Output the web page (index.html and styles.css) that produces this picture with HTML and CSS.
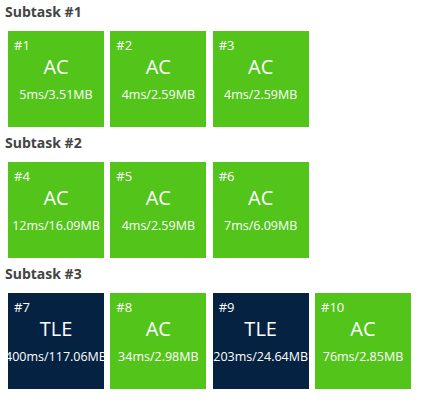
FILE: index.html
```html
<!DOCTYPE html>
<html>
<head>
<meta charset="utf-8">
<link rel="stylesheet" href="styles.css">
</head>
<body>
<div class="page">
  <section class="subtask">
    <h3 class="title">Subtask #1</h3>
    <div class="cases">
      <div class="case ac"><span class="id">#1</span><span class="verdict">AC</span><span class="usage">5ms/3.51MB</span></div>
      <div class="case ac"><span class="id">#2</span><span class="verdict">AC</span><span class="usage">4ms/2.59MB</span></div>
      <div class="case ac"><span class="id">#3</span><span class="verdict">AC</span><span class="usage">4ms/2.59MB</span></div>
    </div>
  </section>
  <section class="subtask">
    <h3 class="title">Subtask #2</h3>
    <div class="cases">
      <div class="case ac"><span class="id">#4</span><span class="verdict">AC</span><span class="usage">12ms/16.09MB</span></div>
      <div class="case ac"><span class="id">#5</span><span class="verdict">AC</span><span class="usage">4ms/2.59MB</span></div>
      <div class="case ac"><span class="id">#6</span><span class="verdict">AC</span><span class="usage">7ms/6.09MB</span></div>
    </div>
  </section>
  <section class="subtask">
    <h3 class="title">Subtask #3</h3>
    <div class="cases">
      <div class="case tle"><span class="id">#7</span><span class="verdict">TLE</span><span class="usage">400ms/117.06MB</span></div>
      <div class="case ac"><span class="id">#8</span><span class="verdict">AC</span><span class="usage">34ms/2.98MB</span></div>
      <div class="case tle"><span class="id">#9</span><span class="verdict">TLE</span><span class="usage">203ms/24.64MB</span></div>
      <div class="case ac"><span class="id">#10</span><span class="verdict">AC</span><span class="usage">76ms/2.85MB</span></div>
    </div>
  </section>
</div>
</body>
</html>
```
FILE: styles.css
```css
html, body {
  margin: 0;
  padding: 0;
  background: #ffffff;
}
body {
  font-family: "Open Sans", "Noto Sans", sans-serif;
}
.page {
  padding: 0 5px;
}
.subtask {
  margin-bottom: 4px;
}
.title {
  margin: 0;
  padding-top: 2px;
  font-size: 14px;
  line-height: 20px;
  font-weight: 700;
  color: #444444;
}
.cases {
  display: flex;
  gap: 6.333px;
  margin: 9px 0 0 3px;
}
.case {
  width: 96px;
  height: 96px;
  flex: none;
  display: flex;
  flex-direction: column;
  align-items: center;
  overflow: hidden;
  color: #ffffff;
}
.ac {
  background: #52c41a;
}
.tle {
  background: #052242;
}
.id {
  align-self: stretch;
  padding: 6px 0 0 6px;
  font-size: 13px;
  line-height: 17px;
  font-weight: 400;
}
.verdict {
  font-size: 20px;
  line-height: 27px;
  margin-top: -1px;
  white-space: nowrap;
}
.usage {
  font-size: 12.5px;
  line-height: 17px;
  margin-top: 6px;
  white-space: nowrap;
}
```
